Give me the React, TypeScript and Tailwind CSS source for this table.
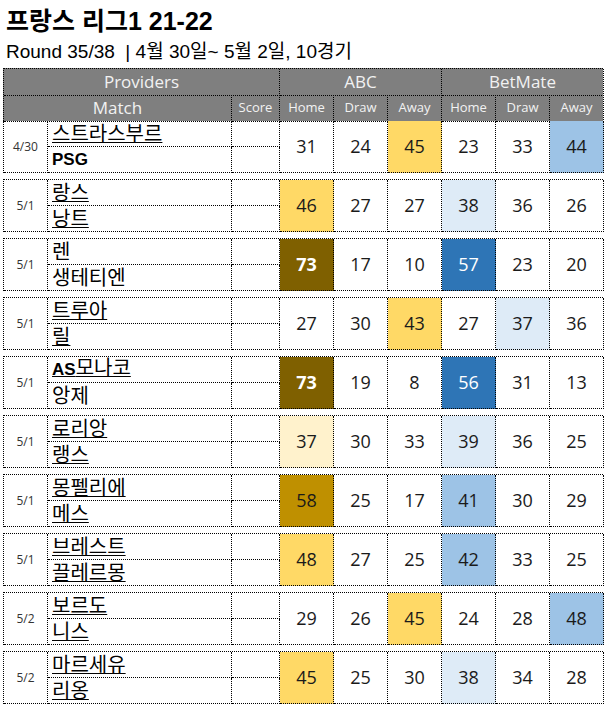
import React from 'react';

type Cell = { v: number; bg?: string; fg?: string; bold?: boolean };

interface Match {
  date: string;
  home: React.ReactNode;
  away: React.ReactNode;
  homeUl?: boolean;
  awayUl?: boolean;
  cells: Cell[];
}

const Y = 'bg-[#ffd966]';
const LY = 'bg-[#fff2cc]';
const DG = 'bg-[#7f6000]';
const MG = 'bg-[#bf9000]';
const DB = 'bg-[#2e75b6]';
const MB = 'bg-[#9dc3e6]';
const LB = 'bg-[#deebf7]';

const latinBold = "font-bold text-[17px] font-['Liberation_Sans',sans-serif]";

const matches: Match[] = [
  {
    date: '4/30', home: '스트라스부르', away: <span className={latinBold}>PSG</span>, homeUl: true,
    cells: [{ v: 31 }, { v: 24 }, { v: 45, bg: Y }, { v: 23 }, { v: 33 }, { v: 44, bg: MB }],
  },
  {
    date: '5/1', home: '랑스', away: '낭트', homeUl: true, awayUl: true,
    cells: [{ v: 46, bg: Y }, { v: 27 }, { v: 27 }, { v: 38, bg: LB }, { v: 36 }, { v: 26 }],
  },
  {
    date: '5/1', home: '렌', away: '생테티엔',
    cells: [{ v: 73, bg: DG, fg: 'text-white', bold: true }, { v: 17 }, { v: 10 }, { v: 57, bg: DB, fg: 'text-white' }, { v: 23 }, { v: 20 }],
  },
  {
    date: '5/1', home: '트루아', away: '릴', homeUl: true, awayUl: true,
    cells: [{ v: 27 }, { v: 30 }, { v: 43, bg: Y }, { v: 27 }, { v: 37, bg: LB }, { v: 36 }],
  },
  {
    date: '5/1', home: <><span className={latinBold}>AS</span>모나코</>, away: '앙제', homeUl: true,
    cells: [{ v: 73, bg: DG, fg: 'text-white', bold: true }, { v: 19 }, { v: 8 }, { v: 56, bg: DB, fg: 'text-white' }, { v: 31 }, { v: 13 }],
  },
  {
    date: '5/1', home: '로리앙', away: '랭스', homeUl: true, awayUl: true,
    cells: [{ v: 37, bg: LY }, { v: 30 }, { v: 33 }, { v: 39, bg: LB }, { v: 36 }, { v: 25 }],
  },
  {
    date: '5/1', home: '몽펠리에', away: '메스', homeUl: true, awayUl: true,
    cells: [{ v: 58, bg: MG }, { v: 25 }, { v: 17 }, { v: 41, bg: MB }, { v: 30 }, { v: 29 }],
  },
  {
    date: '5/1', home: '브레스트', away: '끌레르몽', homeUl: true, awayUl: true,
    cells: [{ v: 48, bg: Y }, { v: 27 }, { v: 25 }, { v: 42, bg: MB }, { v: 33 }, { v: 25 }],
  },
  {
    date: '5/2', home: '보르도', away: '니스', homeUl: true, awayUl: true,
    cells: [{ v: 29 }, { v: 26 }, { v: 45, bg: Y }, { v: 24 }, { v: 28 }, { v: 48, bg: MB }],
  },
  {
    date: '5/2', home: '마르세유', away: '리옹', homeUl: true, awayUl: true,
    cells: [{ v: 45, bg: Y }, { v: 25 }, { v: 30 }, { v: 38, bg: LB }, { v: 34 }, { v: 28 }],
  },
];

const bd = 'border-r border-b border-dotted border-black';
const ul = 'underline underline-offset-[1px] decoration-1';

export default function App() {
  return (
    <div className="w-[605px] h-[705px] overflow-hidden bg-white text-black font-['Open_Sans','Noto_Sans_CJK_KR',sans-serif]">
      <div className="h-[40px] pt-[6px] pl-[6px] text-[25px] leading-[30px] font-bold font-['Liberation_Sans','Noto_Sans_CJK_KR',sans-serif]">
        프랑스 리그1 21-22
      </div>
      <div className="h-[28px] pl-[6px] text-[19px] leading-[24px] font-['Liberation_Sans','Noto_Sans_CJK_KR',sans-serif]">
        Round 35/38 &nbsp;| 4월 30일~ 5월 2일, 10경기
      </div>

      <div className="ml-[3px] w-[600px] border-l border-t border-dotted border-black bg-[#7f7f7f] text-[#f2f2f2]">
        <div className="grid grid-cols-[276px_162px_162px] h-[26px] text-[17px]">
          <div className={`${bd} flex items-center justify-center`}>Providers</div>
          <div className={`${bd} flex items-center justify-center`}>ABC</div>
          <div className={`${bd} flex items-center justify-center`}>BetMate</div>
        </div>
        <div className="grid grid-cols-[228px_48px_54px_54px_54px_54px_54px_54px] h-[26px] text-[13px]">
          <div className={`${bd} flex items-center justify-center text-[17px]`}>Match</div>
          <div className={`${bd} flex items-center justify-center`}>Score</div>
          {['Home', 'Draw', 'Away', 'Home', 'Draw', 'Away'].map((h, i) => (
            <div key={i} className={`${bd} flex items-center justify-center`}>{h}</div>
          ))}
        </div>
      </div>

      {matches.map((m, i) => (
        <div
          key={i}
          className={`ml-[3px] w-[600px] border-l border-dotted border-black ${i > 0 ? 'mt-[6px] border-t' : ''}`}
        >
          <div className="grid grid-cols-[44px_184px_48px_54px_54px_54px_54px_54px_54px] grid-rows-[26px_26px]">
            <div className={`${bd} row-span-2 flex items-center justify-center text-[12px] text-[#333]`}>{m.date}</div>
            <div className={`${bd} flex items-end pl-[4px] text-[20px] leading-[24px]`}>
              <span className={m.homeUl ? ul : ''}>{m.home}</span>
            </div>
            <div className={bd}></div>
            {m.cells.map((c, j) => (
              <div
                key={j}
                className={`${bd} row-span-2 flex items-center justify-center text-[18px] ${c.bg ?? ''} ${c.fg ?? 'text-[#1a1a1a]'} ${c.bold ? 'font-bold' : ''}`}
              >
                {c.v}
              </div>
            ))}
            <div className={`${bd} flex items-end pl-[4px] text-[20px] leading-[24px]`}>
              <span className={m.awayUl ? ul : ''}>{m.away}</span>
            </div>
            <div className={bd}></div>
          </div>
        </div>
      ))}
    </div>
  );
}
